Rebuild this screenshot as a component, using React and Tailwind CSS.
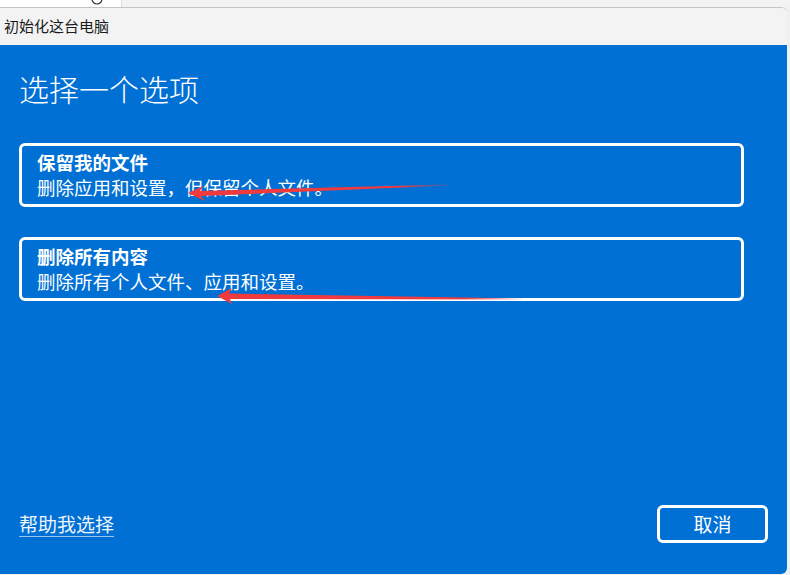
import React from "react";

const font = { fontFamily: '"Noto Sans CJK SC", "Noto Sans", sans-serif' };

function Card({ title, desc }) {
  return (
    <div className="w-[725px] h-[64px] border-[3px] border-white rounded-[6px] flex flex-col justify-center pl-[15px] text-white">
      <div className="text-[18.5px] font-bold leading-[25px]">{title}</div>
      <div className="text-[18.5px] leading-[25px]">{desc}</div>
    </div>
  );
}

export default function App() {
  return (
    <div className="w-[790px] h-[575px] bg-[#f0f0f0] relative overflow-hidden" style={font}>
      <div className="h-[7px] flex">
        <div className="w-[122px] bg-white border-r border-[#dcdcdc] relative">
          <svg className="absolute left-[90px] top-[-8px]" width="14" height="14" viewBox="0 0 14 14">
            <circle cx="7" cy="7" r="5" fill="none" stroke="#333" strokeWidth="1.2" />
          </svg>
        </div>
        <div className="flex-1 bg-[#f3f3f3]" />
      </div>
      <div className="w-[787px] h-[567px] rounded-tr-[6px] rounded-br-[6px] border-t border-[#c4c4c4] flex flex-col overflow-hidden">
        <div className="h-[37px] bg-[#f3f3f3] flex items-center pl-[4px] text-[15px] text-[#1a1a1a]">
          初始化这台电脑
        </div>
        <div className="flex-1 bg-[#0170d4] flex flex-col px-[19px] pt-[23px] pb-[31px]">
          <div className="text-[30px] leading-[40px] text-white font-light">选择一个选项</div>
          <div className="mt-[35px] flex flex-col gap-[30px]">
            <Card title="保留我的文件" desc="删除应用和设置，但保留个人文件。" />
            <Card title="删除所有内容" desc="删除所有个人文件、应用和设置。" />
          </div>
          <div className="flex-1" />
          <div className="flex items-center justify-between">
            <span className="text-[19px] text-[#eef5fc] underline underline-offset-[4px] decoration-[#9cc6ee]">
              帮助我选择
            </span>
            <div className="w-[111px] h-[38px] border-[3px] border-white rounded-[6px] flex items-center justify-center text-white text-[19px]">
              取消
            </div>
          </div>
        </div>
      </div>
      <svg className="absolute left-0 top-0 pointer-events-none" width="790" height="575" viewBox="0 0 790 575">
        <defs>
          <linearGradient id="g1" x1="188" y1="0" x2="450" y2="0" gradientUnits="userSpaceOnUse">
            <stop offset="0" stopColor="#f03a3e" />
            <stop offset="0.8" stopColor="#f03a3e" />
            <stop offset="1" stopColor="#f03a3e" stopOpacity="0.2" />
          </linearGradient>
          <linearGradient id="g2" x1="217" y1="0" x2="525" y2="0" gradientUnits="userSpaceOnUse">
            <stop offset="0" stopColor="#f03a3e" />
            <stop offset="0.8" stopColor="#f03a3e" />
            <stop offset="1" stopColor="#f03a3e" stopOpacity="0.1" />
          </linearGradient>
        </defs>
        <polygon points="188,193 203,186 200,191 447,184.5 448,185.5 201,196 205,201" fill="url(#g1)" />
        <polygon points="217,296 232,288 229,293.5 522,298.5 522,299.5 230,299 232,304" fill="url(#g2)" />
      </svg>
    </div>
  );
}
